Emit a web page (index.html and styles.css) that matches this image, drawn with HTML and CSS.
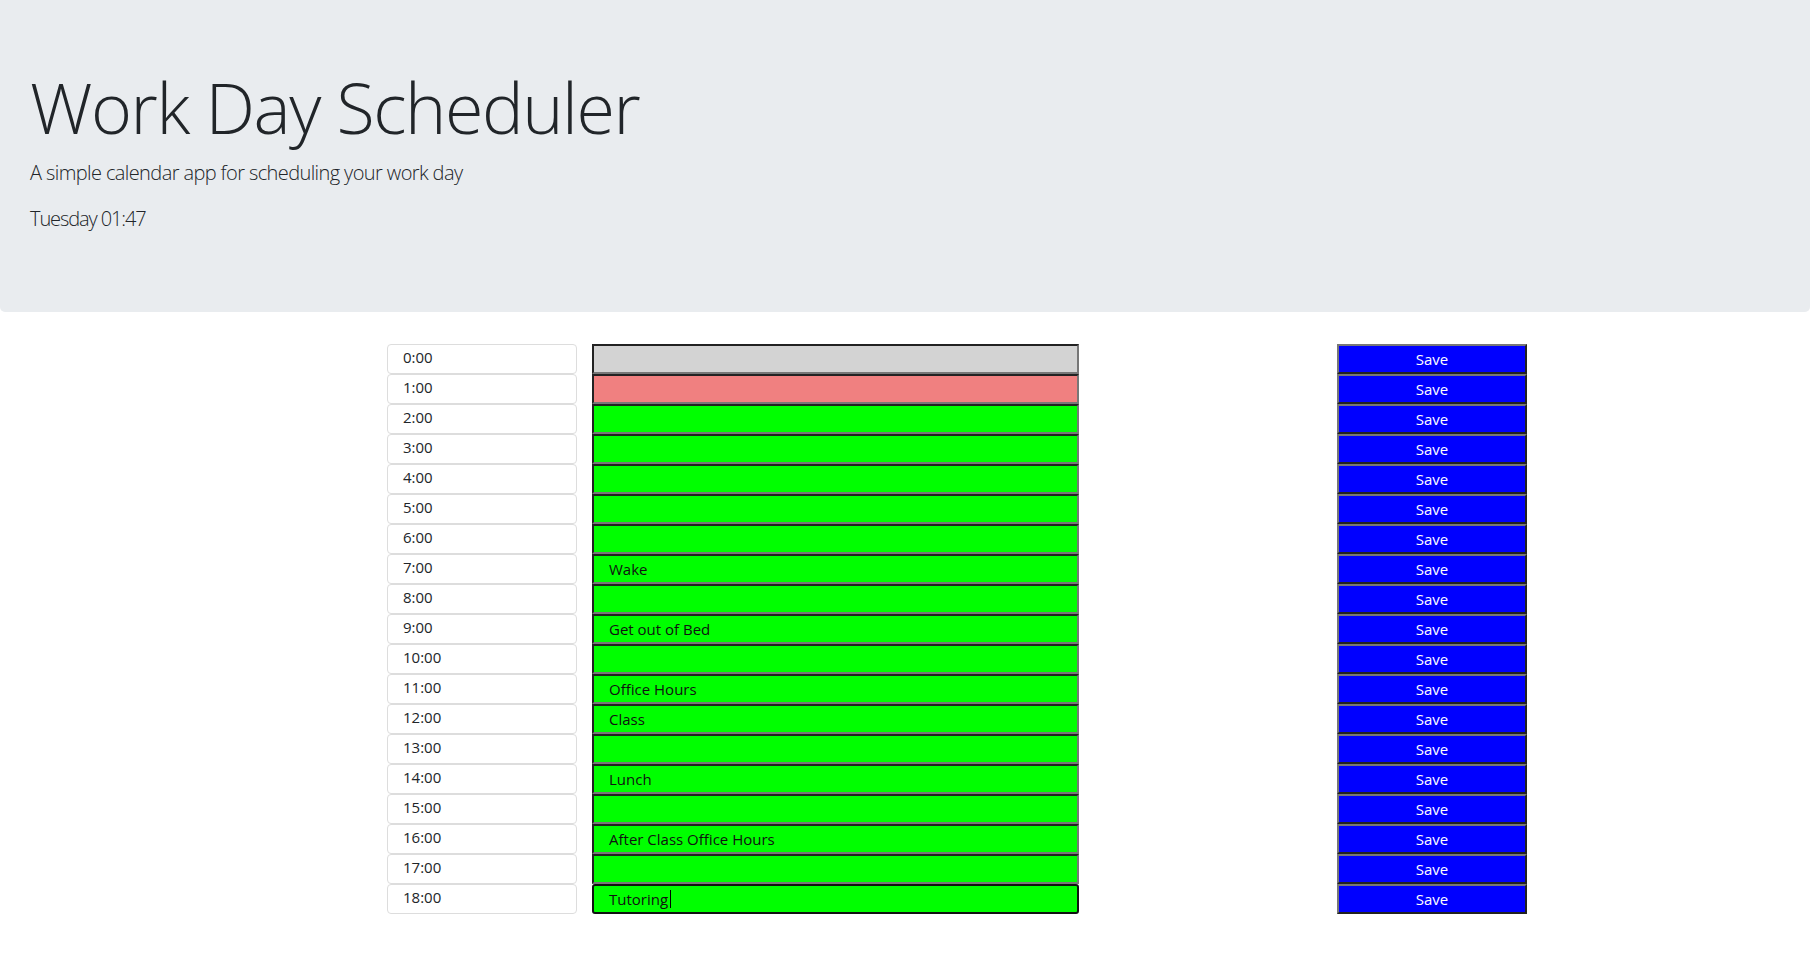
FILE: index.html
```html
<!DOCTYPE html>
<html lang="en">
<head>
<meta charset="utf-8">
<title>Work Day Scheduler</title>
<link rel="stylesheet" href="styles.css">
</head>
<body>
<header class="jumbotron">
  <h1 class="display-3">Work Day Scheduler</h1>
  <p class="lead">A simple calendar app for scheduling your work day</p>
  <p class="lead current-day">Tuesday 01:47</p>
</header>
<main class="container">
  <div class="time-block"><div class="hour">0:00</div><textarea class="description past"></textarea><button class="save-btn">Save</button></div>
  <div class="time-block"><div class="hour">1:00</div><textarea class="description present"></textarea><button class="save-btn">Save</button></div>
  <div class="time-block"><div class="hour">2:00</div><textarea class="description future"></textarea><button class="save-btn">Save</button></div>
  <div class="time-block"><div class="hour">3:00</div><textarea class="description future"></textarea><button class="save-btn">Save</button></div>
  <div class="time-block"><div class="hour">4:00</div><textarea class="description future"></textarea><button class="save-btn">Save</button></div>
  <div class="time-block"><div class="hour">5:00</div><textarea class="description future"></textarea><button class="save-btn">Save</button></div>
  <div class="time-block"><div class="hour">6:00</div><textarea class="description future"></textarea><button class="save-btn">Save</button></div>
  <div class="time-block"><div class="hour">7:00</div><textarea class="description future">Wake</textarea><button class="save-btn">Save</button></div>
  <div class="time-block"><div class="hour">8:00</div><textarea class="description future"></textarea><button class="save-btn">Save</button></div>
  <div class="time-block"><div class="hour">9:00</div><textarea class="description future">Get out of Bed</textarea><button class="save-btn">Save</button></div>
  <div class="time-block"><div class="hour">10:00</div><textarea class="description future"></textarea><button class="save-btn">Save</button></div>
  <div class="time-block"><div class="hour">11:00</div><textarea class="description future">Office Hours</textarea><button class="save-btn">Save</button></div>
  <div class="time-block"><div class="hour">12:00</div><textarea class="description future">Class</textarea><button class="save-btn">Save</button></div>
  <div class="time-block"><div class="hour">13:00</div><textarea class="description future"></textarea><button class="save-btn">Save</button></div>
  <div class="time-block"><div class="hour">14:00</div><textarea class="description future">Lunch</textarea><button class="save-btn">Save</button></div>
  <div class="time-block"><div class="hour">15:00</div><textarea class="description future"></textarea><button class="save-btn">Save</button></div>
  <div class="time-block"><div class="hour">16:00</div><textarea class="description future">After Class Office Hours</textarea><button class="save-btn">Save</button></div>
  <div class="time-block"><div class="hour">17:00</div><textarea class="description future"></textarea><button class="save-btn">Save</button></div>
  <div class="time-block"><div class="hour">18:00</div><div class="field-wrap"><textarea class="description future focused">Tutoring</textarea><span class="caret"></span></div><button class="save-btn">Save</button></div>
</main>
</body>
</html>
```
FILE: styles.css
```css
* { box-sizing: border-box; }

body {
  margin: 0;
  font-family: "Open Sans", "Liberation Sans", sans-serif;
  font-size: 16px;
  color: #212529;
  background: #fff;
}

.jumbotron {
  background: #e9ecef;
  border-radius: 0 0 5px 5px;
  padding: 64px 32px 64px 30px;
  height: 312px;
  margin-bottom: 32px;
}

.display-3 {
  margin: 0 0 8px;
  font-size: 70px;
  font-weight: 300;
  line-height: 86px;
  letter-spacing: -1.45px;
}

.lead {
  margin: 0 0 16px;
  font-size: 20px;
  font-weight: 300;
  line-height: 30px;
  letter-spacing: -0.6px;
}

.current-day {
  letter-spacing: -1.1px;
}

.container {
  width: 1140px;
  margin-left: 387px;
}

.time-block {
  display: flex;
  height: 30px;
}

.hour {
  width: 190px;
  height: 30px;
  border: 1px solid #ddd;
  border-radius: 4px;
  padding-left: 15px;
  line-height: 24px;
  font-size: 15px;
}

.field-wrap {
  position: relative;
  margin-left: 15px;
  width: 487px;
  height: 30px;
}

.description {
  display: block;
  margin-left: 15px;
  width: 487px;
  height: 30px;
  border-style: solid;
  border-width: 2px;
  border-color: #222 #777 #777 #222;
  padding: 2px 15px 0;
  font-family: inherit;
  font-size: 15px;
  line-height: 22px;
  color: #111;
  resize: none;
  overflow: hidden;
}

.field-wrap .description { margin-left: 0; }

.past { background: #d3d3d3; }
.present { background: #f08080; }
.future { background: #00ff00; }

.description.focused {
  border-color: #111;
  border-radius: 3px;
  outline: none;
}

.caret {
  position: absolute;
  left: 78px;
  top: 6px;
  width: 1px;
  height: 18px;
  background: #000;
}

.save-btn {
  margin-left: 258px;
  width: 190px;
  height: 30px;
  border-style: solid;
  border-width: 2px;
  border-color: #777 #222 #222 #777;
  background: #0000ff;
  color: #fff;
  font-family: inherit;
  font-size: 15px;
  padding: 0;
  line-height: 24px;
}
```
